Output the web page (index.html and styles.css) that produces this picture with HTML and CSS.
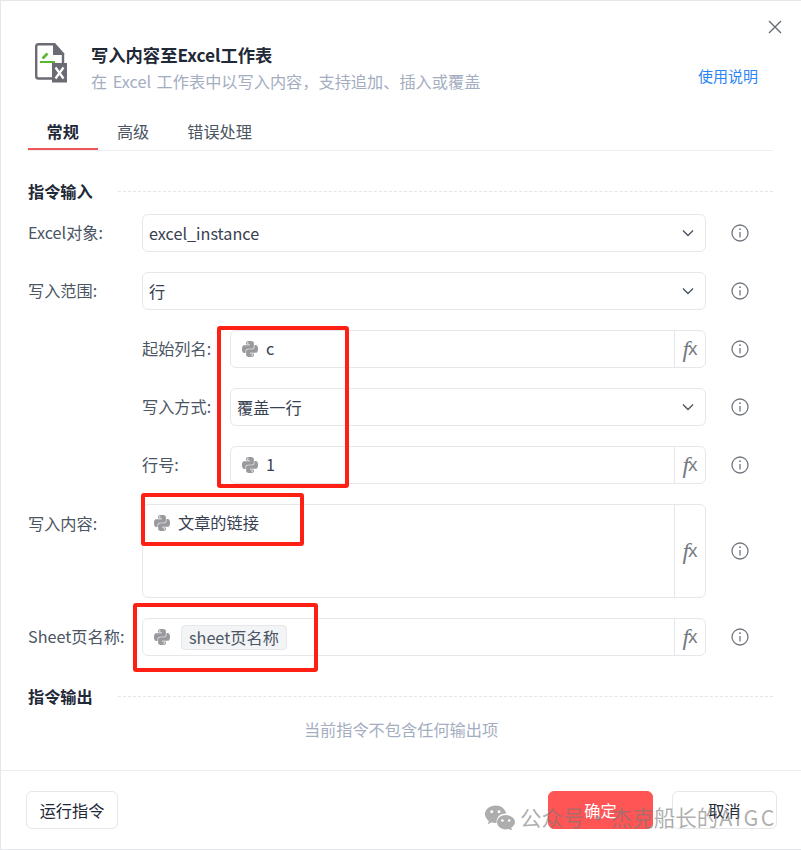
FILE: index.html
```html
<!DOCTYPE html>
<html lang="zh-CN">
<head>
    <meta charset="UTF-8">
    <meta name="viewport" content="width=device-width, initial-scale=1.0">
    <title>写入内容至Excel工作表</title>
    <link rel="stylesheet" href="styles.css">
</head>
<body>
    <svg class="defs" width="0" height="0" aria-hidden="true">
        <symbol id="py" viewBox="0 0 24 24">
            <path d="M14.25.18l.9.2.73.26.59.3.45.32.34.34.25.34.16.33.1.3.04.26.02.2-.01.13V8.5l-.05.63-.13.55-.21.46-.26.38-.3.31-.33.25-.35.19-.35.14-.33.1-.3.07-.26.04-.21.02H8.77l-.69.05-.59.14-.5.22-.41.27-.33.32-.27.35-.2.36-.15.37-.1.35-.07.32-.04.27-.02.21v3.06H3.17l-.21-.03-.28-.07-.32-.12-.35-.18-.36-.26-.36-.36-.35-.46-.32-.59-.28-.73-.21-.88-.14-1.05-.05-1.23.06-1.22.16-1.04.24-.87.32-.71.36-.57.4-.44.42-.33.42-.24.4-.16.36-.1.32-.05.24-.01h.16l.06.01h8.16v-.83H6.18l-.01-2.75-.02-.37.05-.34.11-.31.17-.28.25-.26.31-.23.38-.2.44-.18.51-.15.58-.12.64-.1.71-.06.77-.04.84-.02 1.27.05zm-6.3 1.98l-.23.33-.08.41.08.41.23.34.33.22.41.09.41-.09.33-.22.23-.34.08-.41-.08-.41-.23-.33-.33-.22-.41-.09-.41.09zm13.09 3.95l.28.06.32.12.35.18.36.27.36.35.35.47.32.59.28.73.21.88.14 1.04.05 1.23-.06 1.23-.16 1.04-.24.86-.32.71-.36.57-.4.45-.42.33-.42.24-.4.16-.36.09-.32.05-.24.02-.16-.01h-8.22v.82h5.84l.01 2.76.02.36-.05.34-.11.31-.17.29-.25.25-.31.24-.38.2-.44.17-.51.15-.58.13-.64.09-.71.07-.77.04-.84.01-1.27-.04-1.07-.14-.9-.2-.73-.25-.59-.3-.45-.33-.34-.34-.25-.34-.16-.33-.1-.3-.04-.25-.02-.2.01-.13v-5.34l.05-.64.13-.54.21-.46.26-.38.3-.32.33-.24.35-.2.35-.14.33-.1.3-.06.26-.04.21-.02.13-.01h5.84l.69-.05.59-.14.5-.21.41-.28.33-.32.27-.35.2-.36.15-.36.1-.35.07-.32.04-.28.02-.21V6.07h2.09l.14.01zm-6.47 14.25l-.23.33-.08.41.08.41.23.33.33.23.41.08.41-.08.33-.23.23-.33.08-.41-.08-.41-.23-.33-.33-.23-.41-.08-.41.08z"/>
        </symbol>
        <symbol id="info" viewBox="0 0 18 18">
            <circle cx="9" cy="9" r="8" fill="none" stroke="currentColor" stroke-width="1.3"/>
            <path d="M9 8v5.5" fill="none" stroke="currentColor" stroke-width="1.3"/>
            <circle cx="9" cy="5.2" r=".9" fill="currentColor"/>
        </symbol>
        <symbol id="chevron" viewBox="0 0 12 8">
            <path d="M1 1.5l5 5 5-5" fill="none" stroke="currentColor" stroke-width="1.4"/>
        </symbol>
    </svg>

    <div class="dialog">
        <div class="topbar">
            <svg class="close" width="14" height="14" viewBox="0 0 14 14"><path d="M1 1l12 12M13 1L1 13" fill="none" stroke="currentColor" stroke-width="1.4"/></svg>
        </div>

        <div class="head">
            <svg class="head-icon" width="34" height="41" viewBox="0 0 34 41">
                <path d="M3.500 1.200H19l9 10V34a1.500 1.500 0 0 1-1.500 1.500H3.500A2.300 2.300 0 0 1 1.200 33.200V3.500A2.300 2.300 0 0 1 3.500 1.200z" fill="#fff" stroke="#6b6b73" stroke-width="2.400"/>
                <path d="M18 0h2l9.200 10.500V12H18z" fill="#6b6b73"/>
                <path d="M5 19h15" stroke="#5cb531" stroke-width="2"/>
                <path d="M7.500 15.500l5-5" stroke="#5cb531" stroke-width="2.600"/>
                <rect x="17" y="20" width="15" height="19.500" fill="#6b6b73"/>
                <path d="M20.500 24.500l8 11M28.500 24.500l-8 11" stroke="#fff" stroke-width="2.200"/>
            </svg>
            <div class="head-text">
                <div class="title">写入内容至Excel工作表</div>
                <div class="subtitle">在 Excel 工作表中以写入内容，支持追加、插入或覆盖</div>
            </div>
            <a class="doc-link">使用说明</a>
        </div>

        <div class="tabs">
            <div class="tab active">常规</div>
            <div class="tab">高级</div>
            <div class="tab">错误处理</div>
        </div>

        <div class="section-title">指令输入</div>

        <div class="form">
            <div class="row">
                <label class="label">Excel对象:</label>
                <div class="control select"><span class="value">excel_instance</span><svg class="chevron"><use href="#chevron"/></svg></div>
                <div class="info"><svg><use href="#info"/></svg></div>
            </div>
            <div class="row">
                <label class="label">写入范围:</label>
                <div class="control select"><span class="value">行</span><svg class="chevron"><use href="#chevron"/></svg></div>
                <div class="info"><svg><use href="#info"/></svg></div>
            </div>
            <div class="row sub">
                <label class="label">起始列名:</label>
                <div class="control">
                    <div class="field"><svg class="py"><use href="#py"/></svg><span class="text">c</span></div>
                    <div class="fx"><i>f</i>x</div>
                </div>
                <div class="info"><svg><use href="#info"/></svg></div>
            </div>
            <div class="row sub">
                <label class="label">写入方式:</label>
                <div class="control select"><span class="value">覆盖一行</span><svg class="chevron"><use href="#chevron"/></svg></div>
                <div class="info"><svg><use href="#info"/></svg></div>
            </div>
            <div class="row sub">
                <label class="label">行号:</label>
                <div class="control">
                    <div class="field"><svg class="py"><use href="#py"/></svg><span class="text">1</span></div>
                    <div class="fx"><i>f</i>x</div>
                </div>
                <div class="info"><svg><use href="#info"/></svg></div>
            </div>
            <div class="row tall">
                <label class="label">写入内容:</label>
                <div class="control">
                    <div class="field"><svg class="py"><use href="#py"/></svg><span class="text">文章的链接</span></div>
                    <div class="fx"><i>f</i>x</div>
                </div>
                <div class="info"><svg><use href="#info"/></svg></div>
            </div>
            <div class="row">
                <label class="label">Sheet页名称:</label>
                <div class="control">
                    <div class="field"><svg class="py"><use href="#py"/></svg><span class="tag">sheet页名称</span></div>
                    <div class="fx"><i>f</i>x</div>
                </div>
                <div class="info"><svg><use href="#info"/></svg></div>
            </div>
        </div>

        <div class="section-title output">指令输出</div>
        <div class="empty">当前指令不包含任何输出项</div>

        <div class="footer">
            <button class="btn">运行指令</button>
            <div class="footer-right">
                <button class="btn primary">确定</button>
                <button class="btn">取消</button>
            </div>
        </div>
    </div>

    <!-- red marks drawn on top of the screenshot -->
    <div class="mark mark-a"></div>
    <div class="mark mark-b"></div>
    <div class="mark mark-c"></div>

    <div class="watermark">
        <svg width="31" height="26" viewBox="0 0 32 26">
            <path d="M12 1C5.900 1 1 5 1 10c0 2.800 1.600 5.300 4 7l-1 3.500 4-2c1.200.4 2.500.6 4 .6l1 0C12.500 13 17 9 23 9.500 22 4.600 17.500 1 12 1z" fill="#adadad"/>
            <path d="M22.500 11c-5 0-9 3.300-9 7.400s4 7.400 9 7.400c1 0 2-.1 3-.4l3.500 1.600-.9-3c2.300-1.400 3.900-3.500 3.900-5.600 0-4.100-4.500-7.400-9.500-7.400z" fill="#adadad"/>
            <circle cx="8" cy="7.500" r="1.500" fill="#fff"/><circle cx="15.500" cy="7.500" r="1.500" fill="#fff"/>
            <circle cx="19" cy="16.500" r="1.300" fill="#fff"/><circle cx="26" cy="16.500" r="1.300" fill="#fff"/>
        </svg>
        <span class="mark-text">公众号 · 杰克船长的<span class="latin">AIGC</span></span>
    </div>
</body>
</html>
```

FILE: styles.css
```css
* {
    box-sizing: border-box;
}

body {
    margin: 0;
    background-color: #fff;
    font-family: "Noto Sans CJK SC", "Noto Sans", sans-serif;
    color: #1f2937;
}

.defs {
    position: absolute;
}

.dialog {
    display: flex;
    flex-direction: column;
    width: 801px;
    height: 850px;
    border-top: 1px solid #e5e7eb;
    border-left: 1px solid #e5e7eb;
    border-bottom: 1px solid #e5e7eb;
}

.topbar {
    display: flex;
    justify-content: flex-end;
    height: 42px;
    padding: 19px 19px 0 0;
}

.close {
    color: #666b73;
}

.head {
    display: flex;
    height: 51px;
    padding: 0 43px 0 34px;
}

.head-icon {
    flex-shrink: 0;
    margin-right: 22px;
}

.head-text {
    flex: 1;
}

.title {
    font-size: 17.3px;
    font-weight: 700;
    line-height: 24px;
}

.subtitle {
    margin-top: 2px;
    font-size: 16.2px;
    line-height: 24px;
    word-spacing: 2px;
    color: #a4adbf;
}

.doc-link {
    align-self: flex-end;
    margin-bottom: 6px;
    font-size: 15px;
    line-height: 24px;
    color: #2b85f5;
}

.tabs {
    display: flex;
    margin: 26px 28px 0 27px;
    border-bottom: 1px solid #eceef3;
}

.tab {
    padding: 0 19.5px 7px 18.5px;
    font-size: 16.2px;
    line-height: 23px;
    color: #4b5563;
}

.tab.active {
    padding-bottom: 5px;
    border-bottom: 2px solid #f25555;
    font-weight: 700;
    color: #1f2937;
}

.section-title {
    display: flex;
    align-items: center;
    margin: 28px 28px 0 27px;
    padding-bottom: 1px;
    font-size: 16.2px;
    font-weight: 700;
    line-height: 24px;
}

.section-title::after {
    content: "";
    flex: 1;
    margin-left: 25px;
    border-top: 1px dashed #e3e5ea;
}

.form {
    display: flex;
    flex-direction: column;
    gap: 20px;
    margin: 10px 28px 0 27px;
}

.row {
    display: flex;
    align-items: center;
    height: 38px;
}

.row.sub {
    padding-left: 114px;
}

.row.tall {
    height: 94px;
}

.label {
    flex-shrink: 0;
    width: 114px;
    padding-bottom: 2px;
    font-size: 16.2px;
    color: #4b5563;
}

.row.sub .label {
    width: 88px;
}

.row.tall .label {
    align-self: flex-start;
    line-height: 38px;
}

.control {
    display: flex;
    flex: 1;
    align-self: stretch;
    border: 1px solid #e5e7eb;
    border-radius: 6px;
    font-size: 16.2px;
    color: #374151;
}

.select {
    align-items: center;
    justify-content: space-between;
    padding: 0 11px 0 6px;
}

.chevron {
    width: 12px;
    height: 8px;
    color: #4b5563;
}

.field {
    display: flex;
    flex: 1;
    align-items: center;
    gap: 8px;
    height: 36px;
    padding-left: 11px;
}

.py {
    flex-shrink: 0;
    width: 16px;
    height: 16px;
    fill: #9a9a9e;
}

.text {
    padding-bottom: 3px;
}

.tag {
    margin-left: 3px;
    padding: 0 7px;
    border: 1px solid #e5e7eb;
    border-radius: 4px;
    background-color: #f3f4f6;
    line-height: 23px;
    color: #4b5563;
}

.fx {
    display: flex;
    align-items: center;
    justify-content: center;
    width: 31px;
    border-left: 1px solid #e5e7eb;
    font-family: "Liberation Sans", sans-serif;
    font-size: 19px;
    color: #777b82;
}

.fx i {
    margin-right: -1px;
    font-family: "Liberation Serif", serif;
    font-size: 24px;
}

.info {
    display: flex;
    justify-content: center;
    width: 67px;
    color: #71767f;
}

.info svg {
    width: 18px;
    height: 18px;
}

.section-title.output {
    margin-top: 28px;
}

.empty {
    margin-top: 8px;
    font-size: 16.2px;
    line-height: 24px;
    text-align: center;
    color: #a4adbf;
}

.footer {
    display: flex;
    justify-content: space-between;
    margin-top: auto;
    padding: 20px 24px 20px 25px;
    border-top: 1px solid #eceef0;
}

.footer-right {
    display: flex;
    gap: 19px;
}

.btn {
    width: 92px;
    height: 38px;
    border: 1px solid #e5e7eb;
    border-radius: 6px;
    background-color: #fff;
    font-family: inherit;
    font-size: 16.2px;
    color: #1f2937;
}

.footer-right .btn {
    width: 105px;
}

.btn.primary {
    border-color: #ff5555;
    background-color: #ff5555;
    color: #fff;
}

.mark {
    position: absolute;
    border: 4px solid #ff2015;
    border-radius: 3px;
}

.mark-a {
    left: 217px;
    top: 326px;
    width: 132px;
    height: 162px;
}

.mark-b {
    left: 141px;
    top: 493px;
    width: 163px;
    height: 53px;
}

.mark-c {
    left: 133px;
    top: 603px;
    width: 185px;
    height: 69px;
}

.watermark {
    position: absolute;
    left: 484px;
    top: 802px;
    display: flex;
    align-items: center;
    gap: 5px;
    font-size: 21.5px;
    line-height: 30px;
    white-space: nowrap;
    color: rgba(120, 120, 120, 0.6);
}

.mark-text {
    word-spacing: -2.5px;
}

.latin {
    margin-left: 1px;
    letter-spacing: 2.500px;
}
```
